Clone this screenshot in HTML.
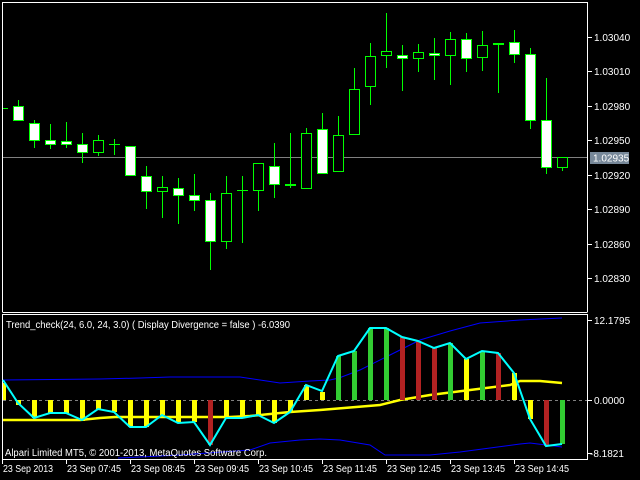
<!DOCTYPE html>
<html><head><meta charset="utf-8"><style>
html,body{margin:0;padding:0;background:#000;width:640px;height:480px;overflow:hidden}
svg{display:block}
text{font-family:"Liberation Sans",sans-serif;font-size:10px;fill:#fff}
</style></head><body>
<svg width="640" height="480" viewBox="0 0 640 480" shape-rendering="crispEdges">
<rect width="640" height="480" fill="#000"/>
<!-- main window border -->
<path d="M2.5 312V2.5H587.5V312M2.5 312.5H587.5" stroke="#fff" fill="none"/>
<!-- indicator window border -->
<path d="M2.5 459V314.5H587.5V459.5H2.5" stroke="#fff" fill="none"/>
<!-- current price line -->
<line x1="3" y1="157.5" x2="587" y2="157.5" stroke="#808080"/>
<g stroke="#00ff00" stroke-width="1">
<line x1="3" y1="108.5" x2="8" y2="108.5"/>
<!-- wicks -->
<path d="M18.5 100V106M34.5 120V148M50.5 124V149M66.5 122V148M82.5 133V163M98.5 135V156M114.5 139V155M146.5 166V209M162.5 176V218M178.5 178V224M194.5 174V211M210.5 193V270M226.5 176V249M242.5 176V243M258.5 163V211M274.5 143V198M290.5 133V188M306.5 128V133M322.5 113V129M338.5 116V172M354.5 68V89M370.5 43V105M386.5 13V68M402.5 45V91M418.5 44V72M434.5 38V80M450.5 32V85M466.5 33V72M482.5 31V71M498.5 43V93M514.5 30V63M530.5 48V129M546.5 78V174M562.5 157V171"/>
<!-- crosses -->
<path d="M109 144.5H120M237 190.5H248M285 185.5H296M285 184.5H296"/>
</g>
<g stroke="#00ff00" stroke-width="1">
<!-- white bodies -->
<g fill="#fff">
<rect x="13.5" y="106.5" width="10" height="14"/>
<rect x="29.5" y="123.5" width="10" height="17"/>
<rect x="45.5" y="140.5" width="10" height="4"/>
<rect x="61.5" y="141.5" width="10" height="3"/>
<rect x="77.5" y="144.5" width="10" height="8"/>
<rect x="125.5" y="146.5" width="10" height="29"/>
<rect x="141.5" y="176.5" width="10" height="15"/>
<rect x="173.5" y="188.5" width="10" height="7"/>
<rect x="189.5" y="195.5" width="10" height="5"/>
<rect x="205.5" y="200.5" width="10" height="41"/>
<rect x="269.5" y="166.5" width="10" height="18"/>
<rect x="317.5" y="129.5" width="10" height="44"/>
<rect x="397.5" y="55.5" width="10" height="3"/>
<rect x="429.5" y="53.5" width="10" height="2"/>
<rect x="461.5" y="39.5" width="10" height="19"/>
<rect x="493.5" y="43.5" width="10" height="1"/>
<rect x="509.5" y="42.5" width="10" height="12"/>
<rect x="525.5" y="54.5" width="10" height="66"/>
<rect x="541.5" y="120.5" width="10" height="47"/>
</g>
<!-- hollow bodies -->
<g fill="#000">
<rect x="93.5" y="140.5" width="10" height="12"/>
<rect x="157.5" y="187.5" width="10" height="4"/>
<rect x="221.5" y="193.5" width="10" height="48"/>
<rect x="253.5" y="163.5" width="10" height="27"/>
<rect x="301.5" y="133.5" width="10" height="55"/>
<rect x="333.5" y="135.5" width="10" height="36"/>
<rect x="349.5" y="89.5" width="10" height="45"/>
<rect x="365.5" y="56.5" width="10" height="30"/>
<rect x="381.5" y="51.5" width="10" height="4"/>
<rect x="413.5" y="52.5" width="10" height="6"/>
<rect x="445.5" y="39.5" width="10" height="16"/>
<rect x="477.5" y="45.5" width="10" height="12"/>
<rect x="557.5" y="157.5" width="10" height="10"/>
</g>
</g>
<!-- price axis -->
<g stroke="#fff"><path d="M588 37.5H592M588 71.5H592M588 106.5H592M588 140.5H592M588 175.5H592M588 209.5H592M588 244.5H592M588 278.5H592M588 320.5H592M588 400.5H592M588 453.5H592"/></g>
<text x="594" y="41">1.03040</text>
<text x="594" y="75">1.03010</text>
<text x="594" y="110">1.02980</text>
<text x="594" y="144">1.02950</text>
<text x="594" y="179">1.02920</text>
<text x="594" y="213">1.02890</text>
<text x="594" y="248">1.02860</text>
<text x="594" y="282">1.02830</text>
<rect x="590" y="152" width="39" height="12" fill="#778899"/>
<text x="593" y="161.5">1.02935</text>
<text x="594" y="324">12.1795</text>
<text x="594" y="404">0.0000</text>
<text x="590" y="457">-8.1821</text>

<!-- indicator -->
<line x1="3" y1="400.5" x2="587" y2="400.5" stroke="#808080" stroke-dasharray="3,3"/>
<g shape-rendering="auto" fill="none">
<polyline stroke="#0000ff" stroke-width="1" points="3,380 100,379 140,378 170,377 240,377 260,380 280,383 310,381 330,380 339,378 360,370 390,355 420,340 450,331 480,323 520,320 562,318"/>
<polyline stroke="#0000ff" stroke-width="1" points="118,458 180,455 250,450 270,443 300,440 320,439 340,440 370,445 385,455 430,455 460,452 490,448 520,444 530,443 562,447"/>
<polyline stroke="#ffff00" stroke-width="2.5" points="3,420 80,420 100,418 115,417 230,417 250,416 290,412 320,410 380,405 400,400 430,395 470,390 510,385 520,381 540,381 562,383"/>
</g>
<g>
<!-- histogram bars: x=center-2, width 5 -->
<g fill="#ffff00">
<rect x="3" y="383" width="3" height="17"/>
<rect x="16" y="400" width="5" height="5"/>
<rect x="32" y="400" width="5" height="18"/>
<rect x="48" y="400" width="5" height="13"/>
<rect x="64" y="400" width="5" height="13"/>
<rect x="80" y="400" width="5" height="21"/>
<rect x="96" y="400" width="5" height="9"/>
<rect x="112" y="400" width="5" height="12"/>
<rect x="128" y="400" width="5" height="27"/>
<rect x="144" y="400" width="5" height="27"/>
<rect x="160" y="400" width="5" height="15"/>
<rect x="176" y="400" width="5" height="23"/>
<rect x="192" y="400" width="5" height="22"/>
<rect x="224" y="400" width="5" height="18"/>
<rect x="240" y="400" width="5" height="18"/>
<rect x="256" y="400" width="5" height="15"/>
<rect x="272" y="400" width="5" height="23"/>
<rect x="288" y="400" width="5" height="12"/>
<rect x="304" y="385" width="5" height="15"/>
<rect x="320" y="392" width="5" height="8"/>
<rect x="464" y="359" width="5" height="41"/>
<rect x="512" y="373" width="5" height="27"/>
<rect x="528" y="400" width="5" height="19"/>
</g>
<g fill="#b22222">
<rect x="208" y="400" width="5" height="45"/>
<rect x="400" y="337" width="5" height="63"/>
<rect x="416" y="341" width="5" height="59"/>
<rect x="432" y="348" width="5" height="52"/>
<rect x="496" y="353" width="5" height="47"/>
<rect x="544" y="400" width="5" height="46"/>
</g>
<g fill="#32cd32">
<rect x="336" y="356" width="5" height="44"/>
<rect x="352" y="351" width="5" height="49"/>
<rect x="368" y="328" width="5" height="72"/>
<rect x="384" y="328" width="5" height="72"/>
<rect x="448" y="343" width="5" height="57"/>
<rect x="480" y="351" width="5" height="49"/>
<rect x="560" y="400" width="5" height="44"/>
</g>
</g>
<polyline shape-rendering="auto" fill="none" stroke="#00ffff" stroke-width="2" points="3,380 18,403 34,418 50,413 66,413 82,420 98,409 114,412 130,427 146,427 162,415 178,423 194,422 210,445 226,418 242,418 258,415 274,423 290,412 306,385 322,391 338,356 354,351 370,328 386,328 402,337 418,341 434,348 450,343 466,359 482,351 498,353 514,373 530,419 546,446 562,444"/>
<text x="6" y="328" textLength="284" lengthAdjust="spacingAndGlyphs">Trend_check(24, 6.0, 24, 3.0) ( Display Divergence = false ) -6.0390</text>
<text x="5" y="456" textLength="262" lengthAdjust="spacingAndGlyphs">Alpari Limited MT5, © 2001-2013, MetaQuotes Software Corp.</text>

<!-- time axis -->
<g stroke="#fff"><path d="M2.5 459V464M66.5 459V464M130.5 459V464M194.5 459V464M258.5 459V464M322.5 459V464M386.5 459V464M450.5 459V464M514.5 459V464"/></g>
<text x="3" y="472" textLength="50" lengthAdjust="spacingAndGlyphs">23 Sep 2013</text>
<text x="67" y="472" textLength="54" lengthAdjust="spacingAndGlyphs">23 Sep 07:45</text>
<text x="131" y="472" textLength="54" lengthAdjust="spacingAndGlyphs">23 Sep 08:45</text>
<text x="195" y="472" textLength="54" lengthAdjust="spacingAndGlyphs">23 Sep 09:45</text>
<text x="259" y="472" textLength="54" lengthAdjust="spacingAndGlyphs">23 Sep 10:45</text>
<text x="323" y="472" textLength="54" lengthAdjust="spacingAndGlyphs">23 Sep 11:45</text>
<text x="387" y="472" textLength="54" lengthAdjust="spacingAndGlyphs">23 Sep 12:45</text>
<text x="451" y="472" textLength="54" lengthAdjust="spacingAndGlyphs">23 Sep 13:45</text>
<text x="515" y="472" textLength="54" lengthAdjust="spacingAndGlyphs">23 Sep 14:45</text>
</svg>
</body></html>
